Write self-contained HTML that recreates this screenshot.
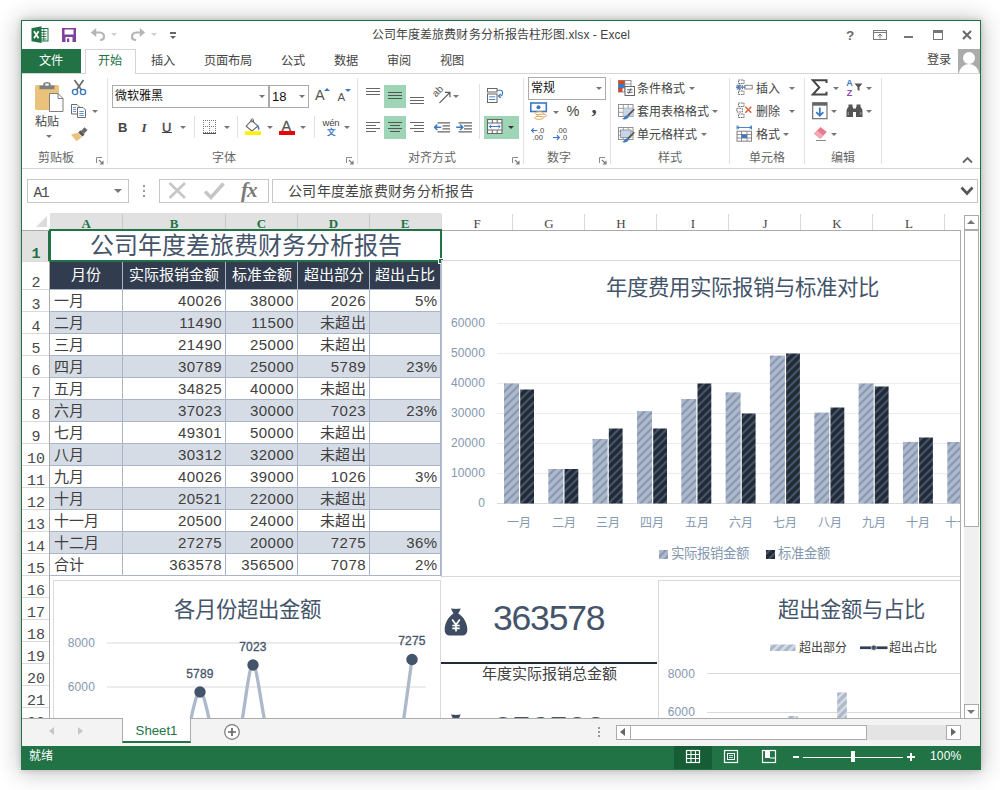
<!DOCTYPE html>
<html lang="zh-CN"><head><meta charset="utf-8"><title>Excel</title>
<style>
*{box-sizing:border-box;margin:0;padding:0}
html,body{width:1000px;height:790px;overflow:hidden;background:#fff}
body{font-family:"Liberation Sans",sans-serif;font-size:12px;color:#444;position:relative}
.a{position:absolute}
.t{position:absolute;white-space:nowrap;line-height:1}
#win{position:absolute;left:21px;top:20px;width:960px;height:750px;background:#fff;border:1px solid #217346;
 box-shadow:0 1px 22px 2px rgba(0,0,0,.24), 0 0 6px rgba(0,0,0,.18);overflow:hidden}
/* inside #win coordinates are offset by (22,21): use wrapper */
#o{position:absolute;left:-22px;top:-21px;width:1000px;height:790px}
.rt{position:absolute;white-space:nowrap;line-height:1;font-size:12px;color:#444}
.cell{position:absolute;white-space:nowrap;line-height:1;font-size:15px;color:#404040}
.num{font-family:"Liberation Sans",sans-serif}
.mono{font-family:"Liberation Mono",monospace}
.serif{font-family:"Liberation Serif",serif}
</style></head>
<body>
<div id="win"><div id="o">
<!-- title bar -->
<div class="t" style="left:372px;top:28.5px;font-size:12px;letter-spacing:0.07px;color:#444;width:258px;text-align:center">公司年度差旅费财务分析报告柱形图.xlsx - Excel</div>
<!-- tabs -->
<div class="a" style="left:22px;top:49px;width:59px;height:25px;background:#217346"></div><div class="t" style="left:39px;top:54.5px;font-size:12.2px;color:#fff">文件</div>
<div class="a" style="left:22px;top:73px;width:958px;height:1px;background:#d4d4d4"></div><div class="a" style="left:85px;top:49px;width:51px;height:25px;background:#fff;border:1px solid #d4d4d4;border-bottom:none"></div><div class="t" style="left:98px;top:54.5px;font-size:12.2px;color:#217346">开始</div>
<div class="t" style="left:151.0px;top:54.5px;font-size:12.2px;color:#444">插入</div><div class="t" style="left:203.5px;top:54.5px;font-size:12.2px;color:#444">页面布局</div><div class="t" style="left:281.0px;top:54.5px;font-size:12.2px;color:#444">公式</div><div class="t" style="left:334.0px;top:54.5px;font-size:12.2px;color:#444">数据</div><div class="t" style="left:387.0px;top:54.5px;font-size:12.2px;color:#444">审阅</div><div class="t" style="left:440.0px;top:54.5px;font-size:12.2px;color:#444">视图</div>
<div class="t" style="left:927px;top:54px;font-size:12.2px;color:#444">登录</div>
<div class="a" style="left:958px;top:49px;width:22px;height:24px;background:#ababab;overflow:hidden"><div class="a" style="left:5px;top:3px;width:12px;height:12px;border-radius:50%;background:#fff"></div><div class="a" style="left:1px;top:15px;width:20px;height:20px;border-radius:50% 50% 0 0;background:#fff"></div></div>
<!-- title bar icons -->
<svg class="a" style="left:31px;top:26px" width="18" height="18" viewBox="0 0 18 18"><rect x="8" y="2.5" width="9" height="12.5" fill="#fff" stroke="#217346" stroke-width="1"/><path d="M10 5.5H15.5M10 8H15.5M10 10.5H15.5M10 13H15.5M12.8 3V15" stroke="#217346" stroke-width="0.9"/><path d="M0.5 2.2 L10.5 0.3 V17 L0.5 15.2 Z" fill="#217346"/><path d="M3 5.2 L7.6 12.2 M7.6 5.2 L3 12.2" stroke="#fff" stroke-width="1.7"/></svg><svg class="a" style="left:62px;top:28px" width="14" height="14" viewBox="0 0 14 14"><rect x="0" y="0" width="14" height="14" fill="#7e3f9e"/><rect x="2.5" y="1.5" width="9" height="5" fill="#fff"/><rect x="3.5" y="9" width="7" height="5" fill="#fff"/><rect x="5" y="10.5" width="2.2" height="3.5" fill="#7e3f9e"/></svg><svg class="a" style="left:90px;top:27px" width="16" height="15" viewBox="0 0 16 15"><path d="M4 5.5 H9.5 C12.5 5.5 14 7.5 14 9.5 C14 11.5 12.5 13 10 13" fill="none" stroke="#b5b5b5" stroke-width="2.2"/><path d="M0.8 5.5 L6.2 1 V10 Z" fill="#b5b5b5"/></svg><div class="a" style="left:110.5px;top:33.0px;width:0;height:0;border-left:3.0px solid transparent;border-right:3.0px solid transparent;border-top:3.0px solid #cfcfcf"></div><svg class="a" style="left:130px;top:27px" width="16" height="15" viewBox="0 0 16 15"><path d="M12 5.5 H6.5 C3.5 5.5 2 7.5 2 9.5 C2 11.5 3.5 13 6 13" fill="none" stroke="#b5b5b5" stroke-width="2.2"/><path d="M15.2 5.5 L9.8 1 V10 Z" fill="#b5b5b5"/></svg><div class="a" style="left:150.5px;top:33.0px;width:0;height:0;border-left:3.0px solid transparent;border-right:3.0px solid transparent;border-top:3.0px solid #cfcfcf"></div><div class="a" style="left:170px;top:32px;width:6px;height:1.5px;background:#666"></div><div class="a" style="left:170.0px;top:35.5px;width:0;height:0;border-left:3.0px solid transparent;border-right:3.0px solid transparent;border-top:3.0px solid #666"></div>
<div class="t" style="left:846px;top:29px;font-size:13.5px;font-weight:bold;color:#6a6a6a">?</div><svg class="a" style="left:873px;top:30px" width="14" height="10" viewBox="0 0 14 10"><rect x="0.5" y="0.5" width="13" height="9" fill="none" stroke="#777"/><path d="M0.5 2.5 H13.5" stroke="#777"/><path d="M7 4 V8.5 M4.8 6.2 L7 4 L9.2 6.2" fill="none" stroke="#777" stroke-width="1"/></svg><div class="a" style="left:904px;top:36px;width:9px;height:2px;background:#777"></div><div class="a" style="left:933px;top:30px;width:10px;height:10px;border:1px solid #777;border-top:3px solid #777"></div><svg class="a" style="left:962px;top:30px" width="10" height="10" viewBox="0 0 10 10"><path d="M1 1 L9 9 M9 1 L1 9" stroke="#6a6a6a" stroke-width="2.1"/></svg>
<!-- ribbon: clipboard -->
<svg class="a" style="left:34px;top:81px" width="30" height="32" viewBox="0 0 30 32"><rect x="1" y="4" width="24" height="25" rx="1.5" fill="#ebc27c"/><path d="M5.5 8.2 V4.6 H9.3 V3.4 C9.3 0.2 16.7 0.2 16.7 3.4 V4.6 H20.5 V8.2 Z" fill="#7f7f7f"/><rect x="11.3" y="2.6" width="3.4" height="2" fill="#fff"/><path d="M15.5 12.5 H24 L29 17.5 V30.5 H15.5 Z" fill="#fff" stroke="#7f7f7f" stroke-width="1"/><path d="M24 12.5 V17.5 H29" fill="none" stroke="#7f7f7f" stroke-width="1"/></svg><div class="t" style="left:35px;top:116px;font-size:12px;color:#444">粘贴</div><div class="a" style="left:45.5px;top:135.0px;width:0;height:0;border-left:3.0px solid transparent;border-right:3.0px solid transparent;border-top:3.0px solid #777"></div><svg class="a" style="left:71px;top:79px" width="16" height="17" viewBox="0 0 16 17"><path d="M3.5 1 L10.5 11 M12.5 1 L5.5 11" stroke="#6b6b6b" stroke-width="1.7" fill="none"/><circle cx="4" cy="13" r="2.6" fill="none" stroke="#3c78c2" stroke-width="1.4"/><circle cx="12" cy="13" r="2.6" fill="none" stroke="#3c78c2" stroke-width="1.4"/></svg><svg class="a" style="left:71px;top:104px" width="16" height="14" viewBox="0 0 16 14"><path d="M0.5 0.5 H6 L8.5 3 V10 H0.5 Z" fill="#fff" stroke="#6b6b6b"/><path d="M2 3.5 H5 M2 5.5 H5 M2 7.5 H5" stroke="#3c78c2" stroke-width="0.8"/><path d="M6.5 3.5 H12 L14.5 6 V13.5 H6.5 Z" fill="#fff" stroke="#6b6b6b"/><path d="M8.3 7.5 H12.8 M8.3 9.5 H12.8 M8.3 11.5 H12.8" stroke="#3c78c2" stroke-width="0.8"/></svg><div class="a" style="left:92.3px;top:109.5px;width:0;height:0;border-left:3.0px solid transparent;border-right:3.0px solid transparent;border-top:3.0px solid #777"></div><svg class="a" style="left:70px;top:126px" width="19" height="16" viewBox="0 0 19 16"><path d="M11 5 L14.5 1.2 L17.6 4 L14 7.8 Z" fill="#6b6b6b"/><path d="M8.2 6.5 L10.4 4.3 L14.6 8.4 L12.4 10.6 Z" fill="#555"/><path d="M1 8.5 L7.8 6.8 L12 11 L6.5 15.2 Z" fill="#ebc27c"/></svg><div class="t" style="left:16px;top:152px;width:80px;text-align:center;font-size:12px;color:#666">剪贴板</div><svg class="a" style="left:96px;top:157px" width="8" height="8" viewBox="0 0 8 8"><path d="M0.5 6 V0.5 H6" fill="none" stroke="#8a8a8a" stroke-width="1"/><path d="M3 3 L7 7 M7 3.8 V7 H3.8" fill="none" stroke="#777" stroke-width="1.1"/></svg><div class="a" style="left:107px;top:78px;width:1px;height:86px;background:#e1e1e1"></div>
<!-- ribbon: font -->
<div class="a" style="left:112px;top:85px;width:157px;height:23px;border:1px solid #ababab;background:#fff"></div><div class="a" style="left:269px;top:85px;width:40px;height:23px;border:1px solid #ababab;border-left:1px solid #ababab;background:#fff"></div><div class="t" style="left:115px;top:90px;font-size:12px;color:#111">微软雅黑</div><div class="a" style="left:258.5px;top:95.0px;width:0;height:0;border-left:3.0px solid transparent;border-right:3.0px solid transparent;border-top:3.0px solid #777"></div><div class="t" style="left:272px;top:90px;font-size:13px;color:#111">18</div><div class="a" style="left:298.5px;top:95.0px;width:0;height:0;border-left:3.0px solid transparent;border-right:3.0px solid transparent;border-top:3.0px solid #777"></div><div class="t" style="left:315px;top:88px;font-size:14.5px;color:#555">A</div><div class="a" style="left:324px;top:88px;width:0;height:0;border-left:3px solid transparent;border-right:3px solid transparent;border-bottom:3.5px solid #3c78c2"></div><div class="t" style="left:337.5px;top:91.5px;font-size:11.5px;color:#555">A</div><div class="a" style="left:345px;top:89px;width:0;height:0;border-left:3px solid transparent;border-right:3px solid transparent;border-top:3.5px solid #3c78c2"></div>
<div class="t" style="left:118px;top:121px;font-size:13px;font-weight:bold;color:#444">B</div><div class="t serif" style="left:141.5px;top:121px;font-size:13px;font-style:italic;font-weight:bold;color:#444">I</div><div class="t" style="left:162px;top:121px;font-size:13px;color:#444;-webkit-text-stroke:0.35px #444">U</div><div class="a" style="left:162px;top:132.3px;width:9.5px;height:1.2px;background:#444"></div><div class="a" style="left:180.3px;top:126.0px;width:0;height:0;border-left:3.0px solid transparent;border-right:3.0px solid transparent;border-top:3.0px solid #777"></div><div class="a" style="left:194px;top:116px;width:1px;height:22px;background:#e1e1e1"></div><svg class="a" style="left:203px;top:120px" width="14" height="14" viewBox="0 0 14 14" shape-rendering="crispEdges"><g fill="#777"><rect x="0" y="0" width="1" height="1"/><rect x="0" y="6" width="1" height="1"/><rect x="0" y="12" width="1" height="1"/><rect x="2" y="0" width="1" height="1"/><rect x="2" y="6" width="1" height="1"/><rect x="2" y="12" width="1" height="1"/><rect x="4" y="0" width="1" height="1"/><rect x="4" y="6" width="1" height="1"/><rect x="4" y="12" width="1" height="1"/><rect x="6" y="0" width="1" height="1"/><rect x="6" y="6" width="1" height="1"/><rect x="6" y="12" width="1" height="1"/><rect x="8" y="0" width="1" height="1"/><rect x="8" y="6" width="1" height="1"/><rect x="8" y="12" width="1" height="1"/><rect x="10" y="0" width="1" height="1"/><rect x="10" y="6" width="1" height="1"/><rect x="10" y="12" width="1" height="1"/><rect x="12" y="0" width="1" height="1"/><rect x="12" y="6" width="1" height="1"/><rect x="12" y="12" width="1" height="1"/><rect x="0" y="0" width="1" height="1"/><rect x="6" y="0" width="1" height="1"/><rect x="12" y="0" width="1" height="1"/><rect x="0" y="2" width="1" height="1"/><rect x="6" y="2" width="1" height="1"/><rect x="12" y="2" width="1" height="1"/><rect x="0" y="4" width="1" height="1"/><rect x="6" y="4" width="1" height="1"/><rect x="12" y="4" width="1" height="1"/><rect x="0" y="6" width="1" height="1"/><rect x="6" y="6" width="1" height="1"/><rect x="12" y="6" width="1" height="1"/><rect x="0" y="8" width="1" height="1"/><rect x="6" y="8" width="1" height="1"/><rect x="12" y="8" width="1" height="1"/><rect x="0" y="10" width="1" height="1"/><rect x="6" y="10" width="1" height="1"/><rect x="12" y="10" width="1" height="1"/><rect x="0" y="12" width="1" height="1"/><rect x="6" y="12" width="1" height="1"/><rect x="12" y="12" width="1" height="1"/></g><rect x="0" y="12.5" width="13" height="1.3" fill="#555"/></svg><div class="a" style="left:223.5px;top:126.0px;width:0;height:0;border-left:3.0px solid transparent;border-right:3.0px solid transparent;border-top:3.0px solid #777"></div><div class="a" style="left:237px;top:116px;width:1px;height:22px;background:#e1e1e1"></div><svg class="a" style="left:244px;top:118px" width="18" height="18" viewBox="0 0 18 18"><path d="M7.5 2.5 L14 8 L7.8 13 L2.2 8.2 Z" fill="#fff" stroke="#666" stroke-width="1.1"/><path d="M7 4.5 V1.8 C7 0.6 9.5 0.6 9.5 1.8 V4" fill="none" stroke="#666" stroke-width="1"/><path d="M13.6 7.2 C15.5 8.5 16 10.5 15 12.5 C14 11 13.2 9.5 13.6 7.2 Z" fill="#3c78c2"/><rect x="1" y="13.3" width="16" height="3.7" fill="#ffef00"/></svg><div class="a" style="left:266.6px;top:126.0px;width:0;height:0;border-left:3.0px solid transparent;border-right:3.0px solid transparent;border-top:3.0px solid #777"></div><div class="t" style="left:281.5px;top:118.5px;font-size:14.5px;color:#555;-webkit-text-stroke:0.3px #555">A</div><div class="a" style="left:279px;top:131.3px;width:16px;height:3.7px;background:#f00000"></div><div class="a" style="left:300.4px;top:126.0px;width:0;height:0;border-left:3.0px solid transparent;border-right:3.0px solid transparent;border-top:3.0px solid #777"></div><div class="a" style="left:314px;top:116px;width:1px;height:22px;background:#e1e1e1"></div><div class="t" style="left:322.5px;top:118px;font-size:9.5px;color:#444;letter-spacing:-0.2px">wén</div><div class="t" style="left:326.5px;top:127.5px;font-size:8.5px;font-weight:bold;color:#3c78c2">文</div><div class="a" style="left:343.6px;top:126.0px;width:0;height:0;border-left:3.0px solid transparent;border-right:3.0px solid transparent;border-top:3.0px solid #777"></div><div class="t" style="left:184px;top:152px;width:80px;text-align:center;font-size:12px;color:#666">字体</div><svg class="a" style="left:346px;top:157px" width="8" height="8" viewBox="0 0 8 8"><path d="M0.5 6 V0.5 H6" fill="none" stroke="#8a8a8a" stroke-width="1"/><path d="M3 3 L7 7 M7 3.8 V7 H3.8" fill="none" stroke="#777" stroke-width="1.1"/></svg><div class="a" style="left:357px;top:78px;width:1px;height:86px;background:#e1e1e1"></div>
<!-- ribbon: alignment -->
<div class="a" style="left:384px;top:85px;width:22px;height:23px;background:#9fd5b7"></div><div class="a" style="left:384px;top:116px;width:22px;height:23px;background:#9fd5b7"></div><div class="a" style="left:484px;top:116px;width:35px;height:23px;background:#9fd5b7"></div>
<div class="a" style="left:366.0px;top:88.3px;width:14.0px;height:1.2px;background:#666"></div><div class="a" style="left:366.0px;top:91.3px;width:14.0px;height:1.2px;background:#666"></div><div class="a" style="left:366.0px;top:94.3px;width:14.0px;height:1.2px;background:#666"></div><div class="a" style="left:388.0px;top:92.0px;width:14.0px;height:1.2px;background:#555"></div><div class="a" style="left:388.0px;top:95.0px;width:14.0px;height:1.2px;background:#555"></div><div class="a" style="left:388.0px;top:98.0px;width:14.0px;height:1.2px;background:#555"></div><div class="a" style="left:410.0px;top:97.3px;width:14.0px;height:1.2px;background:#666"></div><div class="a" style="left:410.0px;top:100.3px;width:14.0px;height:1.2px;background:#666"></div><div class="a" style="left:410.0px;top:103.3px;width:14.0px;height:1.2px;background:#666"></div><svg class="a" style="left:432px;top:86px" width="20" height="18" viewBox="0 0 20 18"><text x="0" y="0" font-family="Liberation Sans, sans-serif" font-size="10" fill="#555" transform="translate(4,11.5) rotate(-45)">ab</text><path d="M7.5 16.8 L17.5 6.8 M13 6.3 H17.9 V11.2" fill="none" stroke="#555" stroke-width="1.2"/></svg><div class="a" style="left:453.3px;top:95.0px;width:0;height:0;border-left:3.0px solid transparent;border-right:3.0px solid transparent;border-top:3.0px solid #777"></div><div class="a" style="left:479px;top:84px;width:1px;height:55px;background:#e1e1e1"></div><svg class="a" style="left:487px;top:88px" width="17" height="15" viewBox="0 0 17 15"><rect x="0.5" y="0.5" width="9.5" height="3.5" fill="#fff" stroke="#666"/><path d="M10 2.2 H13.5 C16.2 2.2 16.2 8 13.5 8 H12" fill="none" stroke="#3c78c2" stroke-width="1.1"/><path d="M13.8 5.8 L11.3 8 L13.8 10.2" fill="none" stroke="#3c78c2" stroke-width="1.1"/><rect x="0.5" y="6" width="9.5" height="8.5" fill="#fff" stroke="#666"/><path d="M2.2 8.8 H8.3 M2.2 11.5 H8.3" stroke="#3c78c2" stroke-width="0.9"/></svg>
<div class="a" style="left:366.0px;top:122.3px;width:14.0px;height:1.2px;background:#666"></div><div class="a" style="left:366.0px;top:125.3px;width:10.0px;height:1.2px;background:#666"></div><div class="a" style="left:366.0px;top:128.3px;width:14.0px;height:1.2px;background:#666"></div><div class="a" style="left:366.0px;top:131.3px;width:10.0px;height:1.2px;background:#666"></div><div class="a" style="left:388.0px;top:122.3px;width:14.0px;height:1.2px;background:#555"></div><div class="a" style="left:390.2px;top:125.3px;width:9.6px;height:1.2px;background:#555"></div><div class="a" style="left:388.0px;top:128.3px;width:14.0px;height:1.2px;background:#555"></div><div class="a" style="left:390.2px;top:131.3px;width:9.6px;height:1.2px;background:#555"></div><div class="a" style="left:410.0px;top:122.3px;width:14.0px;height:1.2px;background:#666"></div><div class="a" style="left:414.0px;top:125.3px;width:10.0px;height:1.2px;background:#666"></div><div class="a" style="left:410.0px;top:128.3px;width:14.0px;height:1.2px;background:#666"></div><div class="a" style="left:414.0px;top:131.3px;width:10.0px;height:1.2px;background:#666"></div><svg class="a" style="left:434px;top:121px" width="17" height="13" viewBox="0 0 17 13"><path d="M3.5 1.8 H16 M8.5 4.8 H16 M8.5 7.8 H16 M3.5 10.8 H16" stroke="#666" stroke-width="1.2"/><path d="M0.6 6.3 H7.2 M3.3 3.5 L0.6 6.3 L3.3 9.1" fill="none" stroke="#3c78c2" stroke-width="1.5"/></svg><svg class="a" style="left:456px;top:121px" width="17" height="13" viewBox="0 0 17 13"><path d="M2.5 1.8 H16 M8 4.8 H16 M8 7.8 H16 M2.5 10.8 H16" stroke="#666" stroke-width="1.2"/><path d="M0.2 6.3 H6.8 M4.1 3.5 L6.8 6.3 L4.1 9.1" fill="none" stroke="#3c78c2" stroke-width="1.5"/></svg><svg class="a" style="left:487px;top:119px" width="16" height="15" viewBox="0 0 16 15"><rect x="0.5" y="0.5" width="14.5" height="14" fill="#fff" stroke="#666" stroke-width="1.1"/><path d="M0.5 4 H15 M0.5 11 H15 M5.3 0.5 V4 M10.2 0.5 V4 M5.3 11 V14.5 M10.2 11 V14.5" stroke="#666" stroke-width="1"/><path d="M2.3 7.5 H13.2 M4.2 5.8 L2.3 7.5 L4.2 9.2 M11.3 5.8 L13.2 7.5 L11.3 9.2" fill="none" stroke="#3c78c2" stroke-width="1"/></svg><div class="a" style="left:508.1px;top:125.8px;width:0;height:0;border-left:3.2px solid transparent;border-right:3.2px solid transparent;border-top:3.4px solid #333"></div><div class="t" style="left:392px;top:152px;width:80px;text-align:center;font-size:12px;color:#666">对齐方式</div><svg class="a" style="left:512px;top:157px" width="8" height="8" viewBox="0 0 8 8"><path d="M0.5 6 V0.5 H6" fill="none" stroke="#8a8a8a" stroke-width="1"/><path d="M3 3 L7 7 M7 3.8 V7 H3.8" fill="none" stroke="#777" stroke-width="1.1"/></svg><div class="a" style="left:523px;top:78px;width:1px;height:86px;background:#e1e1e1"></div>
<!-- ribbon: number -->
<div class="a" style="left:528px;top:77px;width:78px;height:23px;border:1px solid #ababab;background:#fff"></div><div class="t" style="left:531px;top:82px;font-size:12px;color:#111">常规</div><div class="a" style="left:595.6px;top:87.0px;width:0;height:0;border-left:3.0px solid transparent;border-right:3.0px solid transparent;border-top:3.0px solid #777"></div><svg class="a" style="left:530px;top:102px" width="18" height="18" viewBox="0 0 18 18"><rect x="0.8" y="1" width="15.5" height="8.5" fill="#fff" stroke="#3c78c2" stroke-width="1.6"/><circle cx="8.5" cy="5.2" r="2" fill="#3c78c2"/><ellipse cx="9.3" cy="11.3" rx="4.4" ry="1.5" fill="#fff" stroke="#e0a65a" stroke-width="1"/><ellipse cx="12.3" cy="13.6" rx="4.4" ry="1.5" fill="#fff" stroke="#e0a65a" stroke-width="1"/><ellipse cx="9" cy="15.8" rx="4.4" ry="1.5" fill="#fff" stroke="#e0a65a" stroke-width="1"/></svg><div class="a" style="left:552.7px;top:110.5px;width:0;height:0;border-left:3.0px solid transparent;border-right:3.0px solid transparent;border-top:3.0px solid #777"></div><div class="t" style="left:566.5px;top:103.5px;font-size:14.5px;color:#444">%</div><div class="t serif" style="left:591.5px;top:95.5px;font-size:21px;font-weight:bold;color:#444">,</div><svg class="a" style="left:531px;top:127px" width="40" height="14" viewBox="0 0 40 14"><g font-family="Liberation Sans, sans-serif" font-size="7.6" fill="#444"><text x="7" y="6">.0</text><text x="1.5" y="13">.00</text><text x="25.5" y="6">.00</text><text x="30" y="13">.0</text></g><path d="M0.5 3.5 H6.3 M2.7 1.3 L0.5 3.5 L2.7 5.7" fill="none" stroke="#3c78c2" stroke-width="1.2"/><path d="M22 10.5 H28.3 M26 8.3 L28.3 10.5 L26 12.7" fill="none" stroke="#3c78c2" stroke-width="1.2"/></svg><div class="t" style="left:519px;top:152px;width:80px;text-align:center;font-size:12px;color:#666">数字</div><svg class="a" style="left:599px;top:157px" width="8" height="8" viewBox="0 0 8 8"><path d="M0.5 6 V0.5 H6" fill="none" stroke="#8a8a8a" stroke-width="1"/><path d="M3 3 L7 7 M7 3.8 V7 H3.8" fill="none" stroke="#777" stroke-width="1.1"/></svg><div class="a" style="left:610px;top:78px;width:1px;height:86px;background:#e1e1e1"></div>
<!-- ribbon: styles -->
<svg class="a" style="left:618px;top:80px" width="17" height="16" viewBox="0 0 17 16"><rect x="0.5" y="0.5" width="12.5" height="11.5" fill="#fff" stroke="#888" stroke-width="0.9"/><path d="M0.5 4 H13 M0.5 8 H13 M6.8 0.5 V12" stroke="#888" stroke-width="0.8"/><rect x="0.5" y="0.5" width="6.3" height="3.5" fill="#d24726"/><rect x="0.5" y="4" width="6.3" height="4" fill="#3c78c2"/><rect x="0.5" y="8" width="4" height="4" fill="#d24726"/><rect x="7" y="6.5" width="9.5" height="9" fill="#fff" stroke="#666" stroke-width="1"/><path d="M9 9.8 H14.5 M9 12.3 H14.5 M13 8.3 L10.6 13.8" stroke="#555" stroke-width="0.9"/></svg><div class="t" style="left:637px;top:82.5px;font-size:12px;color:#444">条件格式</div><div class="a" style="left:688.5px;top:87.0px;width:0;height:0;border-left:3.0px solid transparent;border-right:3.0px solid transparent;border-top:3.0px solid #777"></div><svg class="a" style="left:618px;top:104px" width="17" height="16" viewBox="0 0 17 16"><rect x="0.5" y="0.5" width="14.5" height="12" fill="#fff" stroke="#888" stroke-width="0.9"/><path d="M0.5 4.3 H15 M0.5 8.3 H15 M5.3 0.5 V12.5 M10.2 0.5 V12.5" stroke="#888" stroke-width="0.8"/><rect x="5.5" y="4.5" width="9.3" height="7.8" fill="#c6d5ea"/><path d="M15.8 4.5 L16.8 5.8 L10.5 12.6 L9 11.3 Z" fill="#555"/><path d="M8.7 11.2 L10.7 13 C9.5 15.6 6 15.8 4 15 C6.3 14.2 6.3 12 8.7 11.2 Z" fill="#3c78c2"/></svg><div class="t" style="left:637px;top:105.5px;font-size:12px;color:#444">套用表格格式</div><div class="a" style="left:712.2px;top:110.0px;width:0;height:0;border-left:3.0px solid transparent;border-right:3.0px solid transparent;border-top:3.0px solid #777"></div><svg class="a" style="left:618px;top:127px" width="17" height="16" viewBox="0 0 17 16"><rect x="0.5" y="0.5" width="14.5" height="12" fill="#fff" stroke="#888" stroke-width="0.9"/><path d="M0.5 4.3 H15 M0.5 8.3 H15 M5.3 0.5 V12.5 M10.2 0.5 V12.5" stroke="#888" stroke-width="0.8"/><rect x="2.5" y="3" width="10.5" height="7.5" fill="#c6d5ea" stroke="#888" stroke-width="0.8"/><path d="M15.8 4.5 L16.8 5.8 L10.5 12.6 L9 11.3 Z" fill="#555"/><path d="M8.7 11.2 L10.7 13 C9.5 15.6 6 15.8 4 15 C6.3 14.2 6.3 12 8.7 11.2 Z" fill="#3c78c2"/></svg><div class="t" style="left:637px;top:128.5px;font-size:12px;color:#444">单元格样式</div><div class="a" style="left:700.6px;top:133.0px;width:0;height:0;border-left:3.0px solid transparent;border-right:3.0px solid transparent;border-top:3.0px solid #777"></div><div class="t" style="left:630px;top:152px;width:80px;text-align:center;font-size:12px;color:#666">样式</div><div class="a" style="left:729px;top:78px;width:1px;height:86px;background:#e1e1e1"></div>
<!-- ribbon: cells -->
<svg class="a" style="left:736px;top:79px" width="17" height="17" viewBox="0 0 17 17"><path d="M2.5 1 H8 V4.5 H2.5 Z M0.8 6.3 H6.3 V10 H0.8 Z M2.5 12 H8 V15.5 H2.5 Z" fill="#fff" stroke="#6a6a6a" stroke-width="1" stroke-dasharray="1.8 0.8"/><rect x="8.8" y="6.3" width="7.4" height="3.7" fill="#fff" stroke="#777" stroke-width="0.9"/><path d="M1.5 8.2 H9.5 M4 6 L1.5 8.2 L4 10.4" fill="none" stroke="#3c78c2" stroke-width="1.3"/></svg><div class="t" style="left:756px;top:82.5px;font-size:12px;color:#444">插入</div><div class="a" style="left:789.0px;top:87.0px;width:0;height:0;border-left:3.0px solid transparent;border-right:3.0px solid transparent;border-top:3.0px solid #777"></div><svg class="a" style="left:736px;top:102px" width="17" height="17" viewBox="0 0 17 17"><path d="M2.5 1 H8 V4.5 H2.5 Z M0.8 6.3 H6.3 V10 H0.8 Z M2.5 12 H8 V15.5 H2.5 Z" fill="#fff" stroke="#6a6a6a" stroke-width="1" stroke-dasharray="1.8 0.8"/><path d="M9.3 4.8 L15.3 10.8 M15.3 4.8 L9.3 10.8" stroke="#e0603a" stroke-width="1.5"/></svg><div class="t" style="left:756px;top:105.5px;font-size:12px;color:#444">删除</div><div class="a" style="left:789.0px;top:110.0px;width:0;height:0;border-left:3.0px solid transparent;border-right:3.0px solid transparent;border-top:3.0px solid #777"></div><svg class="a" style="left:736px;top:125px" width="17" height="17" viewBox="0 0 17 17"><path d="M1 2.5 H15.5 M1 0.5 V4.5 M15.5 0.5 V4.5 M3 1 L1.2 2.5 L3 4 M13.5 1 L15.3 2.5 L13.5 4" fill="none" stroke="#3c78c2" stroke-width="0.9"/><rect x="1" y="6.2" width="14.5" height="10" fill="#fff" stroke="#777" stroke-width="0.9"/><path d="M1 9.5 H15.5 M1 13 H15.5 M5.5 6.2 V16.2 M11 6.2 V16.2" stroke="#777" stroke-width="0.8"/><rect x="5.5" y="9.5" width="5.5" height="3.5" fill="#3c78c2"/></svg><div class="t" style="left:756px;top:128.5px;font-size:12px;color:#444">格式</div><div class="a" style="left:783.0px;top:133.0px;width:0;height:0;border-left:3.0px solid transparent;border-right:3.0px solid transparent;border-top:3.0px solid #777"></div><div class="t" style="left:727px;top:152px;width:80px;text-align:center;font-size:12px;color:#666">单元格</div><div class="a" style="left:804px;top:78px;width:1px;height:86px;background:#e1e1e1"></div>
<!-- ribbon: editing -->
<svg class="a" style="left:811px;top:79px" width="17" height="17" viewBox="0 0 17 17"><path d="M15.5 4 V1.3 H1.8 L8.3 8.4 L1.8 15.5 H15.5 V12.8" fill="none" stroke="#444" stroke-width="2"/></svg><div class="a" style="left:833.3px;top:87.0px;width:0;height:0;border-left:3.0px solid transparent;border-right:3.0px solid transparent;border-top:3.0px solid #777"></div><svg class="a" style="left:846px;top:78px" width="18" height="19" viewBox="0 0 18 19"><g font-family="Liberation Sans, sans-serif" font-size="9" font-weight="bold"><text x="0.3" y="8" fill="#3c78c2">A</text><text x="0.8" y="17.5" fill="#8a4bb0">Z</text></g><path d="M8.5 5.5 H16.5 L13.5 9 V13 L11.5 11.8 V9 Z" fill="#555"/></svg><div class="a" style="left:866.3px;top:87.0px;width:0;height:0;border-left:3.0px solid transparent;border-right:3.0px solid transparent;border-top:3.0px solid #777"></div><svg class="a" style="left:812px;top:102px" width="16" height="18" viewBox="0 0 16 18"><rect x="0.7" y="0.7" width="14.3" height="16" fill="#fff" stroke="#666" stroke-width="1.1"/><rect x="0.7" y="0.7" width="14.3" height="3" fill="#666"/><path d="M7.8 5.5 V13.5 M4.3 10.2 L7.8 13.8 L11.3 10.2" fill="none" stroke="#3c78c2" stroke-width="1.8"/></svg><div class="a" style="left:831.2px;top:110.0px;width:0;height:0;border-left:3.0px solid transparent;border-right:3.0px solid transparent;border-top:3.0px solid #777"></div><svg class="a" style="left:846px;top:104px" width="17" height="14" viewBox="0 0 17 14"><path d="M2.5 0.5 H6.5 V3 H7 V13 H0.5 V7 C0.5 5 1.5 4 2.5 3 Z M10.5 0.5 H14.5 V3 C15.5 4 16.5 5 16.5 7 V13 H10 V3 H10.5 Z M7 4.5 H10 V8 H7 Z" fill="#555"/><path d="M2.3 8 V11 M14.7 8 V11" stroke="#999" stroke-width="1"/></svg><div class="a" style="left:866.3px;top:110.0px;width:0;height:0;border-left:3.0px solid transparent;border-right:3.0px solid transparent;border-top:3.0px solid #777"></div><svg class="a" style="left:812px;top:126px" width="16" height="16" viewBox="0 0 16 16"><path d="M8.5 1 L14.8 6 L8.3 12.8 L2 7.8 Z" fill="#e8798d"/><path d="M2 7.8 L5 4.6 L11.3 9.6 L8.3 12.8 Z" fill="#f3aab6"/><path d="M4 14.5 H14" stroke="#888" stroke-width="1"/></svg><div class="a" style="left:831.2px;top:133.0px;width:0;height:0;border-left:3.0px solid transparent;border-right:3.0px solid transparent;border-top:3.0px solid #777"></div><div class="t" style="left:803px;top:152px;width:80px;text-align:center;font-size:12px;color:#666">编辑</div><div class="a" style="left:881px;top:78px;width:1px;height:86px;background:#e1e1e1"></div><svg class="a" style="left:962px;top:156px" width="11" height="8" viewBox="0 0 11 8"><path d="M1 6.5 L5.5 2 L10 6.5" fill="none" stroke="#666" stroke-width="1.9"/></svg>
<!-- formula bar -->
<div class="a" style="left:22px;top:168px;width:958px;height:1px;background:#d4d4d4"></div><div class="a" style="left:27px;top:179px;width:102px;height:24px;border:1px solid #c6c6c6;background:#fff"></div><div class="t mono" style="left:33.5px;top:185.5px;font-size:14.5px;letter-spacing:-1.2px;color:#4a4a4a">A1</div><div class="a" style="left:114px;top:189px;width:0;height:0;border-left:4px solid transparent;border-right:4px solid transparent;border-top:4px solid #777"></div>
<div class="a" style="left:143px;top:185px;width:2px;height:2px;background:#999"></div><div class="a" style="left:143px;top:190px;width:2px;height:2px;background:#999"></div><div class="a" style="left:143px;top:195px;width:2px;height:2px;background:#999"></div>
<div class="a" style="left:159px;top:179px;width:110px;height:24px;border:1px solid #c6c6c6;background:#fff"></div><svg class="a" style="left:159px;top:179px" width="110" height="24" viewBox="0 0 110 24"><path d="M10.5 4 L26 19 M26 4 L10.5 19" stroke="#c6c6c6" stroke-width="2.6" fill="none"/><path d="M46 12.5 L52 18.5 L64.5 4.5" stroke="#c6c6c6" stroke-width="3.6" fill="none"/></svg><div class="t serif" style="left:241px;top:180px;font-size:21px;font-style:italic;font-weight:bold;color:#7a7a7a;letter-spacing:-1px">fx</div>
<div class="a" style="left:272px;top:179px;width:706px;height:24px;border:1px solid #c6c6c6;background:#fff"></div><div class="t" style="left:288px;top:184px;font-size:14px;color:#444;letter-spacing:0.3px">公司年度差旅费财务分析报告</div><svg class="a" style="left:960px;top:186px" width="14" height="10" viewBox="0 0 14 10"><path d="M1.5 1.5 L7 7.5 L12.5 1.5" stroke="#555" stroke-width="2.6" fill="none"/></svg>
<!-- grid -->
<div class="a" style="left:22px;top:208px;width:939px;height:510px;background:#fff;overflow:hidden">
<div class="a" style="left:-22px;top:-208px;width:1000px;height:790px">
<div class="a" style="left:50px;top:213px;width:391px;height:17px;background:#e1e1e1"></div><div class="t serif" style="left:76.2px;top:216.5px;width:20px;text-align:center;font-size:13px;font-weight:bold;color:#217346">A</div><div class="t serif" style="left:164.0px;top:216.5px;width:20px;text-align:center;font-size:13px;font-weight:bold;color:#217346">B</div><div class="t serif" style="left:251.5px;top:216.5px;width:20px;text-align:center;font-size:13px;font-weight:bold;color:#217346">C</div><div class="t serif" style="left:323.5px;top:216.5px;width:20px;text-align:center;font-size:13px;font-weight:bold;color:#217346">D</div><div class="t serif" style="left:395.2px;top:216.5px;width:20px;text-align:center;font-size:13px;font-weight:bold;color:#217346">E</div><div class="a" style="left:122px;top:214px;width:1px;height:16px;background:#c9c9c9"></div><div class="a" style="left:225px;top:214px;width:1px;height:16px;background:#c9c9c9"></div><div class="a" style="left:297px;top:214px;width:1px;height:16px;background:#c9c9c9"></div><div class="a" style="left:369px;top:214px;width:1px;height:16px;background:#c9c9c9"></div>
<div class="t serif" style="left:467.0px;top:216.5px;width:20px;text-align:center;font-size:13px;color:#444">F</div><div class="t serif" style="left:539.0px;top:216.5px;width:20px;text-align:center;font-size:13px;color:#444">G</div><div class="t serif" style="left:611.0px;top:216.5px;width:20px;text-align:center;font-size:13px;color:#444">H</div><div class="t serif" style="left:683.0px;top:216.5px;width:20px;text-align:center;font-size:13px;color:#444">I</div><div class="t serif" style="left:755.0px;top:216.5px;width:20px;text-align:center;font-size:13px;color:#444">J</div><div class="t serif" style="left:827.0px;top:216.5px;width:20px;text-align:center;font-size:13px;color:#444">K</div><div class="t serif" style="left:899.0px;top:216.5px;width:20px;text-align:center;font-size:13px;color:#444">L</div><div class="a" style="left:441px;top:214px;width:1px;height:16px;background:#dadada"></div><div class="a" style="left:512px;top:214px;width:1px;height:16px;background:#dadada"></div><div class="a" style="left:584px;top:214px;width:1px;height:16px;background:#dadada"></div><div class="a" style="left:656px;top:214px;width:1px;height:16px;background:#dadada"></div><div class="a" style="left:728px;top:214px;width:1px;height:16px;background:#dadada"></div><div class="a" style="left:800px;top:214px;width:1px;height:16px;background:#dadada"></div><div class="a" style="left:872px;top:214px;width:1px;height:16px;background:#dadada"></div><div class="a" style="left:944px;top:214px;width:1px;height:16px;background:#dadada"></div>
<svg class="a" style="left:22px;top:213px" width="28" height="17" viewBox="0 0 28 17"><path d="M25 3 L25 14 L14 14 Z" fill="#dcdcdc"/></svg><div class="a" style="left:22px;top:230px;width:939px;height:1px;background:#ababab"></div><div class="a" style="left:50px;top:229px;width:391px;height:2px;background:#217346"></div>
<div class="a" style="left:49px;top:231px;width:1px;height:487px;background:#ababab"></div><div class="a" style="left:22px;top:231px;width:27px;height:30px;background:#e1e1e1"></div><div class="t mono" style="left:22px;top:247px;width:28px;text-align:center;font-size:15px;font-weight:bold;color:#217346">1</div><div class="a" style="left:22px;top:261px;width:27px;height:1px;background:#dadada"></div><div class="t mono" style="left:22px;top:276px;width:28px;text-align:center;font-size:15px;color:#4a4a4a">2</div><div class="a" style="left:22px;top:289px;width:27px;height:1px;background:#dadada"></div><div class="t mono" style="left:22px;top:298px;width:28px;text-align:center;font-size:15px;color:#4a4a4a">3</div><div class="a" style="left:22px;top:311px;width:27px;height:1px;background:#dadada"></div><div class="t mono" style="left:22px;top:320px;width:28px;text-align:center;font-size:15px;color:#4a4a4a">4</div><div class="a" style="left:22px;top:333px;width:27px;height:1px;background:#dadada"></div><div class="t mono" style="left:22px;top:342px;width:28px;text-align:center;font-size:15px;color:#4a4a4a">5</div><div class="a" style="left:22px;top:355px;width:27px;height:1px;background:#dadada"></div><div class="t mono" style="left:22px;top:364px;width:28px;text-align:center;font-size:15px;color:#4a4a4a">6</div><div class="a" style="left:22px;top:377px;width:27px;height:1px;background:#dadada"></div><div class="t mono" style="left:22px;top:386px;width:28px;text-align:center;font-size:15px;color:#4a4a4a">7</div><div class="a" style="left:22px;top:399px;width:27px;height:1px;background:#dadada"></div><div class="t mono" style="left:22px;top:408px;width:28px;text-align:center;font-size:15px;color:#4a4a4a">8</div><div class="a" style="left:22px;top:421px;width:27px;height:1px;background:#dadada"></div><div class="t mono" style="left:22px;top:430px;width:28px;text-align:center;font-size:15px;color:#4a4a4a">9</div><div class="a" style="left:22px;top:443px;width:27px;height:1px;background:#dadada"></div><div class="t mono" style="left:22px;top:452px;width:28px;text-align:center;font-size:15px;color:#4a4a4a">10</div><div class="a" style="left:22px;top:465px;width:27px;height:1px;background:#dadada"></div><div class="t mono" style="left:22px;top:474px;width:28px;text-align:center;font-size:15px;color:#4a4a4a">11</div><div class="a" style="left:22px;top:487px;width:27px;height:1px;background:#dadada"></div><div class="t mono" style="left:22px;top:496px;width:28px;text-align:center;font-size:15px;color:#4a4a4a">12</div><div class="a" style="left:22px;top:509px;width:27px;height:1px;background:#dadada"></div><div class="t mono" style="left:22px;top:518px;width:28px;text-align:center;font-size:15px;color:#4a4a4a">13</div><div class="a" style="left:22px;top:531px;width:27px;height:1px;background:#dadada"></div><div class="t mono" style="left:22px;top:540px;width:28px;text-align:center;font-size:15px;color:#4a4a4a">14</div><div class="a" style="left:22px;top:553px;width:27px;height:1px;background:#dadada"></div><div class="t mono" style="left:22px;top:562px;width:28px;text-align:center;font-size:15px;color:#4a4a4a">15</div><div class="a" style="left:22px;top:575px;width:27px;height:1px;background:#dadada"></div><div class="t mono" style="left:22px;top:584px;width:28px;text-align:center;font-size:15px;color:#4a4a4a">16</div><div class="a" style="left:22px;top:597px;width:27px;height:1px;background:#dadada"></div><div class="t mono" style="left:22px;top:606px;width:28px;text-align:center;font-size:15px;color:#4a4a4a">17</div><div class="a" style="left:22px;top:619px;width:27px;height:1px;background:#dadada"></div><div class="t mono" style="left:22px;top:628px;width:28px;text-align:center;font-size:15px;color:#4a4a4a">18</div><div class="a" style="left:22px;top:641px;width:27px;height:1px;background:#dadada"></div><div class="t mono" style="left:22px;top:650px;width:28px;text-align:center;font-size:15px;color:#4a4a4a">19</div><div class="a" style="left:22px;top:663px;width:27px;height:1px;background:#dadada"></div><div class="t mono" style="left:22px;top:672px;width:28px;text-align:center;font-size:15px;color:#4a4a4a">20</div><div class="a" style="left:22px;top:685px;width:27px;height:1px;background:#dadada"></div><div class="t mono" style="left:22px;top:694px;width:28px;text-align:center;font-size:15px;color:#4a4a4a">21</div><div class="a" style="left:22px;top:707px;width:27px;height:1px;background:#dadada"></div><div class="t mono" style="left:22px;top:716px;width:28px;text-align:center;font-size:15px;color:#4a4a4a">22</div><div class="a" style="left:22px;top:729px;width:27px;height:1px;background:#dadada"></div>
<div class="a" style="left:48px;top:231px;width:2px;height:30px;background:#217346"></div>
<div class="t" style="left:50px;top:234px;width:391px;text-align:center;font-size:24px;color:#44546a">公司年度差旅费财务分析报告</div>
<div class="a" style="left:441px;top:261px;width:520px;height:1px;background:#d9d9d9"></div>
<div class="a" style="left:50px;top:262px;width:391px;height:28px;background:#323c4f"></div><div class="t" style="left:50.0px;top:267px;width:72.5px;text-align:center;font-size:15px;color:#fff">月份</div><div class="t" style="left:122.5px;top:267px;width:103.0px;text-align:center;font-size:15px;color:#fff">实际报销金额</div><div class="t" style="left:225.5px;top:267px;width:72.0px;text-align:center;font-size:15px;color:#fff">标准金额</div><div class="t" style="left:297.5px;top:267px;width:72.0px;text-align:center;font-size:15px;color:#fff">超出部分</div><div class="t" style="left:369.5px;top:267px;width:71.5px;text-align:center;font-size:15px;color:#fff">超出占比</div>
<div class="cell" style="left:54px;top:293px">一月</div><div class="cell" style="left:122.5px;top:293px;width:99.5px;text-align:right;letter-spacing:0.45px">40026</div><div class="cell" style="left:225.5px;top:293px;width:68.5px;text-align:right;letter-spacing:0.45px">38000</div><div class="cell" style="left:297.5px;top:293px;width:68.5px;text-align:right;letter-spacing:0.45px">2026</div><div class="cell" style="left:369.5px;top:293px;width:68.0px;text-align:right;letter-spacing:0.45px">5%</div>
<div class="a" style="left:50px;top:312px;width:391px;height:22px;background:#d6dce5"></div><div class="cell" style="left:54px;top:315px">二月</div><div class="cell" style="left:122.5px;top:315px;width:99.5px;text-align:right;letter-spacing:0.45px">11490</div><div class="cell" style="left:225.5px;top:315px;width:68.5px;text-align:right;letter-spacing:0.45px">11500</div><div class="cell" style="left:297.5px;top:315px;width:68.5px;text-align:right;letter-spacing:0.45px">未超出</div>
<div class="cell" style="left:54px;top:337px">三月</div><div class="cell" style="left:122.5px;top:337px;width:99.5px;text-align:right;letter-spacing:0.45px">21490</div><div class="cell" style="left:225.5px;top:337px;width:68.5px;text-align:right;letter-spacing:0.45px">25000</div><div class="cell" style="left:297.5px;top:337px;width:68.5px;text-align:right;letter-spacing:0.45px">未超出</div>
<div class="a" style="left:50px;top:356px;width:391px;height:22px;background:#d6dce5"></div><div class="cell" style="left:54px;top:359px">四月</div><div class="cell" style="left:122.5px;top:359px;width:99.5px;text-align:right;letter-spacing:0.45px">30789</div><div class="cell" style="left:225.5px;top:359px;width:68.5px;text-align:right;letter-spacing:0.45px">25000</div><div class="cell" style="left:297.5px;top:359px;width:68.5px;text-align:right;letter-spacing:0.45px">5789</div><div class="cell" style="left:369.5px;top:359px;width:68.0px;text-align:right;letter-spacing:0.45px">23%</div>
<div class="cell" style="left:54px;top:381px">五月</div><div class="cell" style="left:122.5px;top:381px;width:99.5px;text-align:right;letter-spacing:0.45px">34825</div><div class="cell" style="left:225.5px;top:381px;width:68.5px;text-align:right;letter-spacing:0.45px">40000</div><div class="cell" style="left:297.5px;top:381px;width:68.5px;text-align:right;letter-spacing:0.45px">未超出</div>
<div class="a" style="left:50px;top:400px;width:391px;height:22px;background:#d6dce5"></div><div class="cell" style="left:54px;top:403px">六月</div><div class="cell" style="left:122.5px;top:403px;width:99.5px;text-align:right;letter-spacing:0.45px">37023</div><div class="cell" style="left:225.5px;top:403px;width:68.5px;text-align:right;letter-spacing:0.45px">30000</div><div class="cell" style="left:297.5px;top:403px;width:68.5px;text-align:right;letter-spacing:0.45px">7023</div><div class="cell" style="left:369.5px;top:403px;width:68.0px;text-align:right;letter-spacing:0.45px">23%</div>
<div class="cell" style="left:54px;top:425px">七月</div><div class="cell" style="left:122.5px;top:425px;width:99.5px;text-align:right;letter-spacing:0.45px">49301</div><div class="cell" style="left:225.5px;top:425px;width:68.5px;text-align:right;letter-spacing:0.45px">50000</div><div class="cell" style="left:297.5px;top:425px;width:68.5px;text-align:right;letter-spacing:0.45px">未超出</div>
<div class="a" style="left:50px;top:444px;width:391px;height:22px;background:#d6dce5"></div><div class="cell" style="left:54px;top:447px">八月</div><div class="cell" style="left:122.5px;top:447px;width:99.5px;text-align:right;letter-spacing:0.45px">30312</div><div class="cell" style="left:225.5px;top:447px;width:68.5px;text-align:right;letter-spacing:0.45px">32000</div><div class="cell" style="left:297.5px;top:447px;width:68.5px;text-align:right;letter-spacing:0.45px">未超出</div>
<div class="cell" style="left:54px;top:469px">九月</div><div class="cell" style="left:122.5px;top:469px;width:99.5px;text-align:right;letter-spacing:0.45px">40026</div><div class="cell" style="left:225.5px;top:469px;width:68.5px;text-align:right;letter-spacing:0.45px">39000</div><div class="cell" style="left:297.5px;top:469px;width:68.5px;text-align:right;letter-spacing:0.45px">1026</div><div class="cell" style="left:369.5px;top:469px;width:68.0px;text-align:right;letter-spacing:0.45px">3%</div>
<div class="a" style="left:50px;top:488px;width:391px;height:22px;background:#d6dce5"></div><div class="cell" style="left:54px;top:491px">十月</div><div class="cell" style="left:122.5px;top:491px;width:99.5px;text-align:right;letter-spacing:0.45px">20521</div><div class="cell" style="left:225.5px;top:491px;width:68.5px;text-align:right;letter-spacing:0.45px">22000</div><div class="cell" style="left:297.5px;top:491px;width:68.5px;text-align:right;letter-spacing:0.45px">未超出</div>
<div class="cell" style="left:54px;top:513px">十一月</div><div class="cell" style="left:122.5px;top:513px;width:99.5px;text-align:right;letter-spacing:0.45px">20500</div><div class="cell" style="left:225.5px;top:513px;width:68.5px;text-align:right;letter-spacing:0.45px">24000</div><div class="cell" style="left:297.5px;top:513px;width:68.5px;text-align:right;letter-spacing:0.45px">未超出</div>
<div class="a" style="left:50px;top:532px;width:391px;height:22px;background:#d6dce5"></div><div class="cell" style="left:54px;top:535px">十二月</div><div class="cell" style="left:122.5px;top:535px;width:99.5px;text-align:right;letter-spacing:0.45px">27275</div><div class="cell" style="left:225.5px;top:535px;width:68.5px;text-align:right;letter-spacing:0.45px">20000</div><div class="cell" style="left:297.5px;top:535px;width:68.5px;text-align:right;letter-spacing:0.45px">7275</div><div class="cell" style="left:369.5px;top:535px;width:68.0px;text-align:right;letter-spacing:0.45px">36%</div>
<div class="cell" style="left:54px;top:557px">合计</div><div class="cell" style="left:122.5px;top:557px;width:99.5px;text-align:right;letter-spacing:0.45px">363578</div><div class="cell" style="left:225.5px;top:557px;width:68.5px;text-align:right;letter-spacing:0.45px">356500</div><div class="cell" style="left:297.5px;top:557px;width:68.5px;text-align:right;letter-spacing:0.45px">7078</div><div class="cell" style="left:369.5px;top:557px;width:68.0px;text-align:right;letter-spacing:0.45px">2%</div>
<div class="a" style="left:50px;top:289px;width:391px;height:1px;background:#aab4c8"></div><div class="a" style="left:50px;top:311px;width:391px;height:1px;background:#aab4c8"></div><div class="a" style="left:50px;top:333px;width:391px;height:1px;background:#aab4c8"></div><div class="a" style="left:50px;top:355px;width:391px;height:1px;background:#aab4c8"></div><div class="a" style="left:50px;top:377px;width:391px;height:1px;background:#aab4c8"></div><div class="a" style="left:50px;top:399px;width:391px;height:1px;background:#aab4c8"></div><div class="a" style="left:50px;top:421px;width:391px;height:1px;background:#aab4c8"></div><div class="a" style="left:50px;top:443px;width:391px;height:1px;background:#aab4c8"></div><div class="a" style="left:50px;top:465px;width:391px;height:1px;background:#aab4c8"></div><div class="a" style="left:50px;top:487px;width:391px;height:1px;background:#aab4c8"></div><div class="a" style="left:50px;top:509px;width:391px;height:1px;background:#aab4c8"></div><div class="a" style="left:50px;top:531px;width:391px;height:1px;background:#aab4c8"></div><div class="a" style="left:50px;top:553px;width:391px;height:1px;background:#aab4c8"></div><div class="a" style="left:50px;top:575px;width:391px;height:1px;background:#aab4c8"></div>
<div class="a" style="left:122px;top:262px;width:1px;height:314px;background:#aab4c8"></div><div class="a" style="left:225px;top:262px;width:1px;height:314px;background:#aab4c8"></div><div class="a" style="left:297px;top:262px;width:1px;height:314px;background:#aab4c8"></div><div class="a" style="left:369px;top:262px;width:1px;height:314px;background:#aab4c8"></div><div class="a" style="left:440px;top:262px;width:1px;height:314px;background:#aab4c8"></div><div class="a" style="left:49px;top:229px;width:393px;height:33px;border:2px solid #217346"></div><div class="a" style="left:438px;top:258px;width:6px;height:6px;background:#217346;border:1px solid #fff"></div>
<!-- chart 1 -->
<div class="a" style="left:441px;top:260px;width:520px;height:317px;background:#fff;border-top:1px solid #d9d9d9;border-bottom:1px solid #d9d9d9;border-left:1px solid #b4c0d2;overflow:hidden">
<div class="t" style="left:150px;top:17px;width:300px;text-align:center;font-size:21.4px;color:#44546a">年度费用实际报销与标准对比</div>
<svg class="a" style="left:0;top:0" width="520" height="316" viewBox="442 261 520 316">
<defs><pattern id="h1" width="8" height="8" patternUnits="userSpaceOnUse"><rect width="8" height="8" fill="#adb9ca"/><path d="M-2 2 L2 -2 M-2 10 L10 -2 M6 10 L10 6" stroke="#8798b3" stroke-width="2.1"/></pattern><pattern id="h2" width="8" height="8" patternUnits="userSpaceOnUse"><rect width="8" height="8" fill="#222a35"/><path d="M-2 2 L2 -2 M-2 10 L10 -2 M6 10 L10 6" stroke="#44546a" stroke-width="2.1"/></pattern></defs>
<rect x="497" y="323" width="470" height="1" fill="#ececec"/><rect x="497" y="353" width="470" height="1" fill="#ececec"/><rect x="497" y="383" width="470" height="1" fill="#ececec"/><rect x="497" y="413" width="470" height="1" fill="#ececec"/><rect x="497" y="443" width="470" height="1" fill="#ececec"/><rect x="497" y="473" width="470" height="1" fill="#ececec"/><rect x="497" y="503" width="470" height="1" fill="#d9d9d9"/>
<rect x="504.0" y="383.4" width="15" height="120.1" fill="url(#h1)"/><rect x="520.2" y="389.5" width="13.8" height="114.0" fill="url(#h2)"/><rect x="548.3" y="469.0" width="15" height="34.5" fill="url(#h1)"/><rect x="564.5" y="469.0" width="13.8" height="34.5" fill="url(#h2)"/><rect x="592.6" y="439.0" width="15" height="64.5" fill="url(#h1)"/><rect x="608.8" y="428.5" width="13.8" height="75.0" fill="url(#h2)"/><rect x="637.0" y="411.1" width="15" height="92.4" fill="url(#h1)"/><rect x="653.2" y="428.5" width="13.8" height="75.0" fill="url(#h2)"/><rect x="681.3" y="399.0" width="15" height="104.5" fill="url(#h1)"/><rect x="697.5" y="383.5" width="13.8" height="120.0" fill="url(#h2)"/><rect x="725.6" y="392.4" width="15" height="111.1" fill="url(#h1)"/><rect x="741.8" y="413.5" width="13.8" height="90.0" fill="url(#h2)"/><rect x="769.9" y="355.6" width="15" height="147.9" fill="url(#h1)"/><rect x="786.1" y="353.5" width="13.8" height="150.0" fill="url(#h2)"/><rect x="814.3" y="412.6" width="15" height="90.9" fill="url(#h1)"/><rect x="830.5" y="407.5" width="13.8" height="96.0" fill="url(#h2)"/><rect x="858.6" y="383.4" width="15" height="120.1" fill="url(#h1)"/><rect x="874.8" y="386.5" width="13.8" height="117.0" fill="url(#h2)"/><rect x="902.9" y="441.9" width="15" height="61.6" fill="url(#h1)"/><rect x="919.1" y="437.5" width="13.8" height="66.0" fill="url(#h2)"/><rect x="947.3" y="442.0" width="15" height="61.5" fill="url(#h1)"/><rect x="963.5" y="431.5" width="13.8" height="72.0" fill="url(#h2)"/><rect x="991.6" y="421.7" width="15" height="81.8" fill="url(#h1)"/><rect x="1007.8" y="443.5" width="13.8" height="60.0" fill="url(#h2)"/>
<rect x="659" y="550" width="9" height="9" fill="url(#h1)"/><rect x="766" y="550" width="9" height="9" fill="url(#h2)"/></svg>
<div class="t" style="left:3px;top:56px;width:40px;text-align:right;font-size:12px;letter-spacing:0.15px;color:#8497b0">60000</div><div class="t" style="left:3px;top:86px;width:40px;text-align:right;font-size:12px;letter-spacing:0.15px;color:#8497b0">50000</div><div class="t" style="left:3px;top:116px;width:40px;text-align:right;font-size:12px;letter-spacing:0.15px;color:#8497b0">40000</div><div class="t" style="left:3px;top:146px;width:40px;text-align:right;font-size:12px;letter-spacing:0.15px;color:#8497b0">30000</div><div class="t" style="left:3px;top:176px;width:40px;text-align:right;font-size:12px;letter-spacing:0.15px;color:#8497b0">20000</div><div class="t" style="left:3px;top:206px;width:40px;text-align:right;font-size:12px;letter-spacing:0.15px;color:#8497b0">10000</div><div class="t" style="left:3px;top:236px;width:40px;text-align:right;font-size:12px;letter-spacing:0.15px;color:#8497b0">0</div>
<div class="t" style="left:52.2px;top:256px;width:50px;text-align:center;font-size:12px;color:#8497b0">一月</div><div class="t" style="left:96.5px;top:256px;width:50px;text-align:center;font-size:12px;color:#8497b0">二月</div><div class="t" style="left:140.8px;top:256px;width:50px;text-align:center;font-size:12px;color:#8497b0">三月</div><div class="t" style="left:185.2px;top:256px;width:50px;text-align:center;font-size:12px;color:#8497b0">四月</div><div class="t" style="left:229.5px;top:256px;width:50px;text-align:center;font-size:12px;color:#8497b0">五月</div><div class="t" style="left:273.8px;top:256px;width:50px;text-align:center;font-size:12px;color:#8497b0">六月</div><div class="t" style="left:318.1px;top:256px;width:50px;text-align:center;font-size:12px;color:#8497b0">七月</div><div class="t" style="left:362.5px;top:256px;width:50px;text-align:center;font-size:12px;color:#8497b0">八月</div><div class="t" style="left:406.8px;top:256px;width:50px;text-align:center;font-size:12px;color:#8497b0">九月</div><div class="t" style="left:451.1px;top:256px;width:50px;text-align:center;font-size:12px;color:#8497b0">十月</div><div class="t" style="left:495.5px;top:256px;width:50px;text-align:center;font-size:12px;color:#8497b0">十一月</div><div class="t" style="left:539.8px;top:256px;width:50px;text-align:center;font-size:12px;color:#8497b0">十二月</div>
<div class="t" style="left:229px;top:286px;font-size:13.4px;color:#8497b0">实际报销金额</div><div class="t" style="left:336px;top:286px;font-size:13.3px;color:#8497b0">标准金额</div>
</div>
<!-- chart 2: line chart -->
<div class="a" style="left:53px;top:580px;width:388px;height:200px;background:#fff;border:1px solid #d9d9d9;overflow:hidden">
<div class="t" style="left:93px;top:19px;width:200px;text-align:center;font-size:21.4px;color:#44546a">各月份超出金额</div>
<div class="t" style="left:1px;top:56px;width:40px;text-align:right;font-size:12px;letter-spacing:0.15px;color:#8497b0">8000</div><div class="t" style="left:1px;top:100px;width:40px;text-align:right;font-size:12px;letter-spacing:0.15px;color:#8497b0">6000</div>
<svg class="a" style="left:0;top:0" width="386" height="198" viewBox="54 581 386 198">
<rect x="107" y="642.5" width="318.5" height="1" fill="#d9d9d9"/><rect x="107" y="686.5" width="318.5" height="1" fill="#d9d9d9"/>
<path d="M189.5 726 C194 704 197 692 200 692 C203 692 206 704 210.5 726" fill="none" stroke="#adb9ca" stroke-width="3.3" stroke-linecap="round"/><path d="M240.5 730 C246 700 249 665 253 665 C257 665 260 700 266.5 730" fill="none" stroke="#adb9ca" stroke-width="3.3"/><path d="M402 730 C405 712 409 680 412 659.5" fill="none" stroke="#adb9ca" stroke-width="3.3"/>
<circle cx="200.0" cy="692.0" r="5.7" fill="#44546a"/><circle cx="253.0" cy="665.0" r="5.7" fill="#44546a"/><circle cx="412.0" cy="659.5" r="5.7" fill="#44546a"/>
</svg>
<div class="t" style="left:126px;top:86.5px;width:40px;text-align:center;font-size:12px;color:#44546a;letter-spacing:0.2px;-webkit-text-stroke:0.3px #44546a">5789</div><div class="t" style="left:179px;top:59.5px;width:40px;text-align:center;font-size:12px;color:#44546a;letter-spacing:0.2px;-webkit-text-stroke:0.3px #44546a">7023</div><div class="t" style="left:338px;top:54.0px;width:40px;text-align:center;font-size:12px;color:#44546a;letter-spacing:0.2px;-webkit-text-stroke:0.3px #44546a">7275</div>
</div>
<!-- KPI panel -->
<svg class="a" style="left:444px;top:608px" width="24" height="28" viewBox="0 0 24 28"><path d="M7 0.3 C8.5 1.3 10 0.2 12 1 C14 0.2 15.5 1.3 16.6 0.3 C16.2 2.5 15 4 14.3 5.6 C20 9 23.5 16 23.3 22 C23.2 26 21 27.6 17.5 27.6 L6.5 27.6 C3 27.6 0.8 26 0.7 22 C0.5 16 4 9 9.4 5.6 C8.8 4 7.6 2.5 7 0.3 Z" fill="#3e4c63"/><path d="M8.2 11.5 L12 16.8 L15.8 11.5 M12 16.8 L12 23.5 M8.3 17.5 L15.7 17.5 M8.3 20.4 L15.7 20.4" stroke="#fff" stroke-width="1.7" fill="none"/></svg><div class="t" style="left:493px;top:600.7px;font-size:35.5px;color:#44546a;letter-spacing:-1.2px">363578</div>
<div class="a" style="left:441px;top:662px;width:216px;height:2px;background:#222b3a"></div><div class="t" style="left:441px;top:666px;width:216px;text-align:center;font-size:15px;color:#404040">年度实际报销总金额</div>
<svg class="a" style="left:444px;top:714px" width="24" height="28" viewBox="0 0 24 28"><path d="M7 0.3 C8.5 1.3 10 0.2 12 1 C14 0.2 15.5 1.3 16.6 0.3 C16.2 2.5 15 4 14.3 5.6 C20 9 23.5 16 23.3 22 C23.2 26 21 27.6 17.5 27.6 L6.5 27.6 C3 27.6 0.8 26 0.7 22 C0.5 16 4 9 9.4 5.6 C8.8 4 7.6 2.5 7 0.3 Z" fill="#3e4c63"/><path d="M8.2 11.5 L12 16.8 L15.8 11.5 M12 16.8 L12 23.5 M8.3 17.5 L15.7 17.5 M8.3 20.4 L15.7 20.4" stroke="#fff" stroke-width="1.7" fill="none"/></svg><div class="t" style="left:493px;top:711.7px;font-size:35.5px;color:#44546a;letter-spacing:-1.2px">356500</div>
<!-- chart 3 -->
<div class="a" style="left:658px;top:580px;width:320px;height:200px;background:#fff;border:1px solid #d9d9d9;overflow:hidden">
<div class="t" style="left:92px;top:19px;width:200px;text-align:center;font-size:21.3px;color:#44546a">超出金额与占比</div>
<svg class="a" style="left:0;top:0" width="318" height="198" viewBox="659 581 318 198">
<defs><pattern id="h3" width="8" height="8" patternUnits="userSpaceOnUse"><rect width="8" height="8" fill="#adb9ca"/><path d="M-2 2 L2 -2 M-2 10 L10 -2 M6 10 L10 6" stroke="#d6dce5" stroke-width="2.3"/></pattern></defs><rect x="707" y="673" width="260" height="1" fill="#d9d9d9"/><rect x="707" y="712" width="260" height="1" fill="#d9d9d9"/>
<rect x="837.2" y="692.4" width="9.6" height="40" fill="url(#h3)"/><rect x="788.2" y="716" width="9.6" height="20" fill="url(#h3)"/><rect x="770" y="644.5" width="25.5" height="6.5" fill="url(#h3)"/><rect x="860" y="646.4" width="27.5" height="2.7" fill="#333f50"/><circle cx="873.8" cy="647.7" r="2.6" fill="#44546a" stroke="#fff" stroke-width="0.6"/>
</svg>
<div class="t" style="left:140px;top:61px;font-size:12px;color:#404040">超出部分</div><div class="t" style="left:230px;top:61px;font-size:12px;color:#404040">超出占比</div>
<div class="t" style="left:-4px;top:87px;width:40px;text-align:right;font-size:12px;letter-spacing:0.15px;color:#8497b0">8000</div><div class="t" style="left:-4px;top:125px;width:40px;text-align:right;font-size:12px;letter-spacing:0.15px;color:#8497b0">6000</div>
</div>
</div></div>
<div class="a" style="left:960px;top:230px;width:1px;height:488px;background:#ababab"></div><div class="a" style="left:964px;top:215px;width:15px;height:15px;border:1px solid #ababab;background:#fff"></div><div class="a" style="left:967px;top:220px;width:0;height:0;border-left:4px solid transparent;border-right:4px solid transparent;border-bottom:4px solid #777"></div><div class="a" style="left:964px;top:230px;width:15px;height:474px;background:#f0f0f0"></div><div class="a" style="left:964px;top:230px;width:15px;height:297px;border:1px solid #ababab;background:#fff"></div><div class="a" style="left:964px;top:704px;width:15px;height:15px;border:1px solid #ababab;background:#fff"></div><div class="a" style="left:967px;top:710px;width:0;height:0;border-left:4px solid transparent;border-right:4px solid transparent;border-top:4px solid #777"></div>
<!-- sheet tab bar -->
<div class="a" style="left:22px;top:718px;width:958px;height:28px;background:#f3f3f3;border-top:1px solid #ababab"></div><div class="a" style="left:122px;top:718px;width:69px;height:25px;background:#fff;border-left:1px solid #ababab;border-right:1px solid #ababab;border-bottom:2px solid #217346"></div><div class="t" style="left:122px;top:724px;width:69px;text-align:center;font-size:13.2px;color:#217346">Sheet1</div>
<div class="a" style="left:49px;top:727px;width:0;height:0;border-top:4px solid transparent;border-bottom:4px solid transparent;border-right:5px solid #c6c6c6"></div><div class="a" style="left:78px;top:727px;width:0;height:0;border-top:4px solid transparent;border-bottom:4px solid transparent;border-left:5px solid #c6c6c6"></div><svg class="a" style="left:223px;top:723px" width="18" height="18" viewBox="0 0 18 18"><circle cx="9" cy="9" r="7.3" fill="#fff" stroke="#7a7a7a" stroke-width="1.2"/><path d="M9 5 L9 13 M5 9 L13 9" stroke="#666" stroke-width="1.7"/></svg>
<div class="a" style="left:598px;top:727px;width:2px;height:2px;background:#999"></div><div class="a" style="left:598px;top:731px;width:2px;height:2px;background:#999"></div><div class="a" style="left:598px;top:735px;width:2px;height:2px;background:#999"></div><div class="a" style="left:616px;top:725px;width:15px;height:15px;border:1px solid #ababab;background:#fff"></div><div class="a" style="left:620px;top:728px;width:0;height:0;border-top:4px solid transparent;border-bottom:4px solid transparent;border-right:5px solid #666"></div><div class="a" style="left:631px;top:725px;width:315px;height:15px;background:#e4e4e4"></div><div class="a" style="left:630px;top:725px;width:237px;height:15px;border:1px solid #ababab;background:#fff"></div><div class="a" style="left:946px;top:725px;width:15px;height:15px;border:1px solid #ababab;background:#fff"></div><div class="a" style="left:951px;top:728px;width:0;height:0;border-top:4px solid transparent;border-bottom:4px solid transparent;border-left:5px solid #666"></div>
<!-- status bar -->
<div class="a" style="left:22px;top:746px;width:958px;height:24px;background:#217346"></div><div class="t" style="left:29px;top:750px;font-size:12px;color:#fff">就绪</div>
<div class="a" style="left:674px;top:746px;width:38px;height:23px;background:#165c34"></div><svg class="a" style="left:674px;top:746px" width="120" height="24" viewBox="0 0 120 24" fill="none" stroke="#fff"><rect x="12.5" y="4.5" width="13" height="12" stroke-width="1.2"/><path d="M17 4.5 V16.5 M21.5 4.5 V16.5 M12.5 8.5 H25.5 M12.5 12.5 H25.5" stroke-width="1.1"/><rect x="50.5" y="4.5" width="13" height="12" stroke-width="1.2"/><rect x="53.5" y="7.5" width="7" height="6" stroke-width="1"/><path d="M55 9.5 H59 M55 11.5 H59" stroke-width="0.8"/><rect x="88.5" y="4.5" width="13" height="12" stroke-width="1.2"/><rect x="91" y="5" width="5" height="7" fill="#fff" stroke="none"/><path d="M96 12 H101" stroke-width="1"/></svg>
<div class="a" style="left:793px;top:756px;width:6px;height:2px;background:#fff"></div><div class="a" style="left:803px;top:757px;width:100px;height:1px;background:#fff"></div><div class="a" style="left:851px;top:751px;width:4px;height:11px;background:#fff"></div><div class="a" style="left:907px;top:756px;width:8px;height:2px;background:#fff"></div><div class="a" style="left:910px;top:753px;width:2px;height:8px;background:#fff"></div><div class="t" style="left:930px;top:750px;font-size:12px;color:#fff;letter-spacing:0.2px">100%</div>
</div></div>
</body></html>
